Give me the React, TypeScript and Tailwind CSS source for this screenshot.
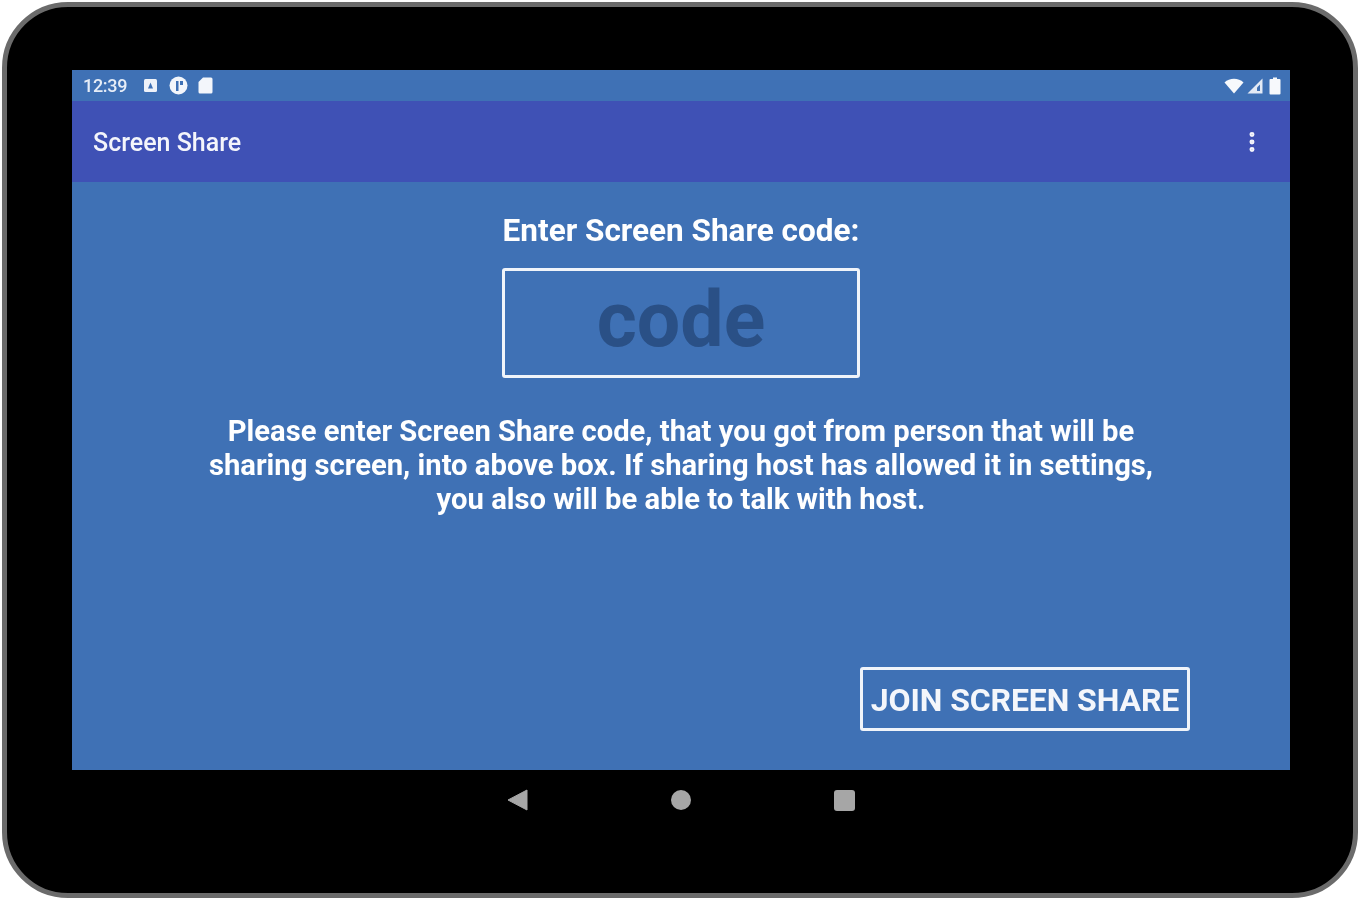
import { MoreVertical } from 'lucide-react';

function StatusBar() {
  return (
    <div className="flex h-[31px] items-center justify-between bg-[#3f71b5] pl-[11px] pr-[9px]">
      <div className="flex items-center">
        <span className="text-[18px] font-medium leading-none tracking-[-0.3px] text-[#e6edf7]">12:39</span>
        <svg className="ml-[16px]" width="15" height="15" viewBox="0 0 15 15">
          <rect x="1" y="1" width="13" height="13" rx="1.5" fill="#eef2f9" />
          <path d="M5 10.5 7.5 4.5 10 10.5Z" fill="#3f71b5" />
        </svg>
        <svg className="ml-[11px]" width="19" height="19" viewBox="0 0 19 19">
          <circle cx="9.5" cy="9.5" r="9" fill="#f3f6fb" />
          <path d="M7 15V5h2.5v10ZM11 5h3v4h-3Z" fill="#3f71b5" />
        </svg>
        <svg className="ml-[10px]" width="15" height="17" viewBox="0 0 15 17">
          <path d="M5 0.5h8a1.5 1.5 0 0 1 1.5 1.5v13a1.5 1.5 0 0 1-1.5 1.5H2A1.5 1.5 0 0 1 0.5 15V5Z" fill="#f3f6fb" />
        </svg>
      </div>
      <div className="flex items-center">
        <svg className="mr-[2px]" width="20" height="16" viewBox="0 0 20 16">
          <path d="M0.5 4.5C5.5-0.5 14.5-0.5 19.5 4.5L10 15.5Z" fill="#f7f9fc" />
        </svg>
        <svg className="ml-[1px]" width="16" height="16" viewBox="0 0 16 16">
          <path d="M15.5 0.5V15.5H0.5Z" fill="#e3eaf5" />
          <path d="M13 6.5V13H10V9.5Z" fill="#3f71b5" />
        </svg>
        <svg className="ml-[6px]" width="12" height="18" viewBox="0 0 12 18">
          <path d="M4 0.5h4v1.5h2.5a1 1 0 0 1 1 1v13.5a1 1 0 0 1-1 1h-9a1 1 0 0 1-1-1V3a1 1 0 0 1 1-1H4Z" fill="#f7f9fc" />
        </svg>
      </div>
    </div>
  );
}

function AppBar() {
  return (
    <div className="flex h-[81px] items-center justify-between bg-[#3f51b5] pl-[21px] pr-[25px]">
      <span className="pt-[3px] text-[25px] font-medium text-[#f4f5fb]">Screen Share</span>
      <MoreVertical className="h-[26px] w-[26px] text-[#f4f5fb]" strokeWidth={2.6} />
    </div>
  );
}

function NavBar() {
  return (
    <div className="flex w-[1218px] items-center justify-center gap-[143px] pt-[19px]">
      <svg width="21" height="22" viewBox="0 0 21 22">
        <path d="M1 11 20 1V21Z" fill="#a6a6a6" stroke="#a6a6a6" strokeLinejoin="round" />
      </svg>
      <span className="h-[20px] w-[20px] rounded-full bg-[#a6a6a6]" />
      <span className="h-[21px] w-[21px] rounded-[3px] bg-[#a6a6a6]" />
    </div>
  );
}

export default function App() {
  return (
    <div className="h-[900px] w-[1359px] overflow-hidden bg-white p-[2px] font-['Roboto',sans-serif] blur-[0.5px]">
      <div className="h-[896px] w-[1356px] rounded-[66px] border-[5px] border-[#6b6b6b] bg-black pl-[65px] pt-[63px]">
        <div className="flex h-[700px] w-[1218px] flex-col bg-[#3f71b5]">
          <StatusBar />
          <AppBar />
          <div className="flex flex-1 flex-col items-center pt-[29px]">
            <h1 className="text-[31.5px] font-bold leading-[40px] text-white">
              Enter Screen Share code:
            </h1>
            <div className="mt-[17px] flex h-[110px] w-[358px] items-center justify-center rounded-[3px] border-[3px] border-[#f0f4fa] pb-[5px] text-[77px] font-bold leading-none text-[#2a5086]">
              code
            </div>
            <p className="mt-[36px] w-[1000px] text-center text-[29.2px] font-bold leading-[34px] text-white">
              Please enter Screen Share code, that you got from person that will be
              <br />
              sharing screen, into above box. If sharing host has allowed it in settings,
              <br />
              you also will be able to talk with host.
            </p>
            <div className="mt-auto flex w-full justify-end pb-[39px] pr-[100px]">
              <button
                type="button"
                className="flex h-[64px] w-[330px] items-center justify-center rounded-[3px] border-[3px] border-[#f0f4fa] pt-[2px] text-[32px] font-bold leading-none tracking-[-0.1px] text-[#f4f6fb]"
              >
                JOIN SCREEN SHARE
              </button>
            </div>
          </div>
        </div>
        <NavBar />
      </div>
    </div>
  );
}
